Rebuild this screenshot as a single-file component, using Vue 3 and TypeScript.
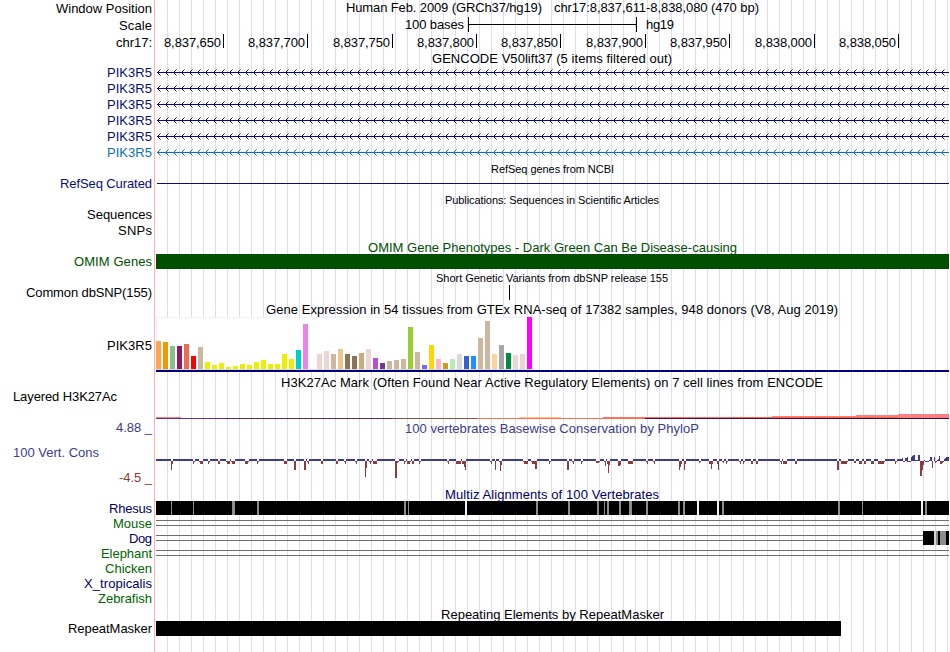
<template>
  <div class="browser">
    <svg class="track" width="950" height="16">
      <text class="label" x="152" y="13" textLength="96">Window Position</text>
      <text x="346" y="12" textLength="196">Human Feb. 2009 (GRCh37/hg19)</text>
      <text x="554" y="12" textLength="205">chr17:8,837,611-8,838,080 (470 bp)</text>
    </svg>

    <svg class="track" width="950" height="17">
      <text class="label" x="152" y="14" textLength="33">Scale</text>
      <text class="label" x="464" y="13" textLength="59">100 bases</text>
      <path d="M468 1h1v7h167v-7h1v15h-1v-7h-167v7h-1z" />
      <text x="646" y="13" textLength="28">hg19</text>
    </svg>

    <svg class="track" width="950" height="17">
      <text class="label" x="152" y="14" textLength="36">chr17:</text>
      <template v-for="t in ticks" :key="t.x">
        <text class="label" :x="t.x - 2" y="14" textLength="57">{{ t.text }}</text>
        <rect :x="t.x" y="1" width="1" height="14" />
      </template>
    </svg>

    <svg class="track" width="950" height="14">
      <text x="432" y="13" textLength="240">GENCODE V50lift37 (5 items filtered out)</text>
    </svg>
    <svg v-for="(color, i) in genes" :key="i" class="track" width="950" height="16" :fill="color">
      <text class="label" x="152" y="13" textLength="45">PIK3R5</text>
      <rect x="157" y="8" width="792" height="1" />
      <path class="chevrons" :d="chevrons" :stroke="color" />
    </svg>

    <svg class="track" width="950" height="15">
      <text class="small" x="491" y="13" textLength="123">RefSeq genes from NCBI</text>
    </svg>
    <svg class="track navy" width="950" height="16">
      <text class="label" x="152" y="13" textLength="92">RefSeq Curated</text>
      <rect x="157" y="8" width="792" height="1" />
    </svg>

    <svg class="track" width="950" height="15">
      <text class="small" x="445" y="13" textLength="214">Publications: Sequences in Scientific Articles</text>
    </svg>
    <svg class="track" width="950" height="16">
      <text class="label" x="152" y="13" textLength="65">Sequences</text>
    </svg>
    <svg class="track" width="950" height="16">
      <text class="label" x="152" y="13" textLength="34">SNPs</text>
    </svg>

    <svg class="track omim" width="950" height="15">
      <text x="368" y="14" textLength="369">OMIM Gene Phenotypes - Dark Green Can Be Disease-causing</text>
    </svg>
    <svg class="track omim" width="950" height="16">
      <text class="label" x="152" y="13" textLength="78">OMIM Genes</text>
      <rect x="156" y="1" width="793" height="15" />
    </svg>

    <svg class="track" width="950" height="15">
      <text class="small" x="436" y="13" textLength="232">Short Genetic Variants from dbSNP release 155</text>
    </svg>
    <svg class="track" width="950" height="16">
      <text class="label" x="152" y="13" textLength="126">Common dbSNP(155)</text>
      <rect x="509" y="1" width="1" height="15" />
    </svg>

    <svg class="track" width="950" height="16">
      <text x="266" y="14" textLength="572">Gene Expression in 54 tissues from GTEx RNA-seq of 17382 samples, 948 donors (V8, Aug 2019)</text>
    </svg>
    <svg class="track" width="950" height="56">
      <text class="label" x="152" y="34" textLength="45">PIK3R5</text>
      <rect x="156" y="1" width="378" height="53" fill="#f2f2f2" />
      <rect x="157" y="2" width="376" height="51" fill="#fff" />
      <rect x="156" y="53" width="378" height="1" fill="#d9d9d9" />
      <rect
        v-for="(b, i) in tissues"
        :key="i"
        :x="156 + i * 7"
        :y="53 - b[0]"
        width="5"
        :height="b[0]"
        :fill="b[1]"
      />
      <rect x="156" y="54" width="793" height="2" fill="#000078" />
    </svg>

    <svg class="track" width="950" height="16">
      <text x="281" y="15" textLength="542">H3K27Ac Mark (Often Found Near Active Regulatory Elements) on 7 cell lines from ENCODE</text>
    </svg>
    <svg class="track" width="950" height="31">
      <text x="13" y="13" textLength="104">Layered H3K27Ac</text>
      <rect v-for="(s, i) in acetyl" :key="i" :x="s[0]" :y="s[2]" :width="s[1] - s[0]" :height="s[3]" :fill="s[4]" />
    </svg>

    <svg class="track cons" width="950" height="68">
      <text x="405" y="14" textLength="294">100 vertebrates Basewise Conservation by PhyloP</text>
      <text class="label" x="152" y="13" textLength="36">4.88 _</text>
      <text x="13" y="38" textLength="86">100 Vert. Cons</text>
      <text class="label negative" x="152" y="63" textLength="33">-4.5 _</text>
      <rect v-for="(s, i) in conserved" :key="'c' + i" :x="s[0]" y="40" :width="s[1] - s[0]" height="2" />
      <rect v-for="(s, i) in peaks" :key="'p' + i" :x="s[0]" :y="42 - s[2]" :width="s[1]" :height="s[2]" />
      <rect
        v-for="(s, i) in dips"
        :key="'d' + i"
        class="negative"
        :x="s[0]"
        y="42"
        :width="s[1]"
        :height="s[2]"
      />
    </svg>

    <svg class="track multiz over" width="950" height="13">
      <text x="445" y="12" textLength="214">Multiz Alignments of 100 Vertebrates</text>
    </svg>
    <svg v-for="s in species" :key="s.name" class="track" width="950" height="15">
      <text class="label" :class="s.group" x="152" y="13" :textLength="s.width">{{ s.name }}</text>
      <template v-if="s.gap">
        <rect x="156" y="5" :width="s.gap - 156" height="1" fill="#6e6e6e" />
        <rect x="156" y="10" :width="s.gap - 156" height="1" fill="#6e6e6e" />
      </template>
      <rect v-for="(b, i) in s.blocks" :key="i" :x="b[0]" y="1" :width="b[1]" height="14" :fill="b[2]" />
    </svg>

    <svg class="track" width="950" height="15">
      <text x="441" y="14" textLength="223">Repeating Elements by RepeatMasker</text>
    </svg>
    <svg class="track" width="950" height="32">
      <text class="label" x="152" y="13" textLength="84">RepeatMasker</text>
      <rect x="156" y="1" width="685" height="15" />
    </svg>
  </div>
</template>

<script setup lang="ts">
type Block = [x: number, width: number, fill: string]

const winStart = 8837610
const winBases = 470

function baseToX(pos: number) {
  return Math.floor(156 + ((pos - winStart) * 793) / winBases)
}

const ticks = Array.from({ length: 9 }, (_, i) => {
  const pos = 8837650 + i * 50
  return { x: baseToX(pos), text: pos.toLocaleString('en-US') }
})

const genes = ['#0c0c78', '#0c0c78', '#0c0c78', '#0c0c78', '#0c0c78', '#0c70b4']

// strand arrows, one every 8px
const chevrons = Array.from({ length: 99 }, (_, i) => `M${160.5 + i * 8} 5.5l-3 3l3 3`).join('')

// [height, color] for each tissue
const tissues: [number, string][] = [
  [28, '#ffa54f'], [27, '#ee9a00'], [23, '#8fbc8f'], [23, '#8b1c62'], [25, '#ee6a50'], [13, '#ff0000'],
  [22, '#cdb79e'], [7, '#eeee00'], [4, '#eeee00'], [6, '#eeee00'], [2, '#eeee00'], [3, '#eeee00'],
  [5, '#eeee00'], [4, '#eeee00'], [7, '#eeee00'], [9, '#eeee00'], [5, '#eeee00'], [5, '#eeee00'],
  [15, '#eeee00'], [10, '#eeee00'], [19, '#00cdcd'], [45, '#ee82ee'], [0, '#9ac0cd'], [15, '#eed5d2'],
  [18, '#eed5d2'], [15, '#cdb79e'], [20, '#eec591'], [15, '#8b7355'], [13, '#8b7355'], [16, '#cdaa7d'],
  [20, '#eed5d2'], [11, '#b452cd'], [6, '#7a378b'], [8, '#cdb79e'], [9, '#cdb79e'], [10, '#cdb79e'],
  [42, '#9acd32'], [17, '#cdb79e'], [4, '#7a67ee'], [24, '#ffd700'], [10, '#ffb6c1'], [6, '#cd9b1d'],
  [10, '#b4eeb4'], [15, '#d9d9d9'], [13, '#3a5fcd'], [13, '#1e90ff'], [31, '#cdb79e'], [48, '#cdb79e'],
  [15, '#ffd39b'], [24, '#a6a6a6'], [16, '#008b45'], [14, '#eed5d2'], [15, '#eed5d2'], [52, '#ff00ff'],
]

// [x1, x2, y, height, color]
const acetyl: [number, number, number, number, string][] = [
  [156, 181, 29, 1, '#ff8080'],
  [156, 223, 30, 1, '#64308c'],
  [223, 392, 30, 1, '#642c40'],
  [392, 477, 30, 1, '#80563c'],
  [477, 645, 30, 1, '#ff6e46'],
  [519, 561, 29, 1, '#ffc382'],
  [603, 730, 29, 1, '#ff7068'],
  [730, 898, 29, 1, '#ff6444'],
  [772, 856, 28, 1, '#ff8078'],
  [856, 898, 27, 2, '#ff8080'],
  [898, 949, 26, 4, '#ff8080'],
  [645, 814, 30, 1, '#500a46'],
  [814, 949, 30, 1, '#3c0a32'],
]

// [x, width, depth]
const dips: [number, number, number][] = [
  [171, 1, 9], [172, 1, 3], [193, 1, 3], [194, 1, 1], [199, 1, 1], [200, 3, 3], [208, 1, 3], [209, 1, 1],
  [218, 2, 3], [226, 1, 1], [227, 3, 3], [231, 1, 1], [232, 3, 3], [245, 3, 3], [248, 1, 1], [257, 1, 3],
  [258, 1, 1], [284, 3, 3], [294, 2, 9], [304, 2, 9], [307, 1, 1], [308, 1, 3], [321, 2, 3], [336, 2, 3],
  [344, 1, 1], [345, 1, 3], [355, 1, 1], [356, 1, 3], [365, 1, 16], [366, 1, 7], [369, 1, 1], [370, 1, 3],
  [371, 1, 1], [373, 4, 3], [395, 2, 17], [397, 1, 2], [398, 1, 1], [404, 1, 3], [405, 1, 1], [407, 3, 3],
  [410, 1, 1], [412, 2, 3], [419, 1, 3], [420, 1, 1], [447, 1, 1], [448, 1, 3], [456, 5, 3], [462, 2, 3],
  [464, 1, 6], [465, 1, 9], [490, 1, 1], [491, 1, 3], [495, 1, 9], [499, 1, 1], [500, 1, 10], [501, 1, 4],
  [523, 1, 1], [524, 4, 3], [531, 1, 1], [532, 3, 3], [535, 2, 8], [549, 1, 3], [550, 1, 1], [567, 2, 9],
  [572, 1, 1], [573, 1, 3], [581, 1, 3], [582, 1, 1], [596, 3, 2], [599, 1, 1], [604, 1, 1], [605, 1, 5],
  [607, 1, 3], [608, 1, 12], [609, 1, 4], [618, 2, 5], [620, 1, 4], [628, 5, 3], [646, 1, 1], [647, 1, 3],
  [653, 1, 1], [654, 1, 3], [679, 1, 9], [680, 1, 6], [681, 1, 3], [684, 1, 9], [685, 1, 3], [699, 1, 2],
  [700, 1, 1], [709, 2, 3], [711, 1, 8], [712, 1, 3], [717, 1, 3], [718, 1, 9], [722, 1, 1], [723, 1, 2],
  [726, 1, 3], [727, 1, 1], [739, 1, 1], [740, 1, 3], [743, 1, 3], [744, 1, 1], [751, 2, 3], [756, 2, 3],
  [780, 1, 1], [781, 1, 3], [783, 4, 3], [795, 2, 3], [837, 2, 9], [841, 6, 3], [847, 1, 1], [854, 2, 2],
  [859, 3, 3], [864, 2, 3], [871, 3, 3], [878, 6, 3], [884, 1, 1], [895, 1, 3], [896, 1, 1], [903, 2, 1],
  [907, 4, 1], [920, 2, 15], [922, 1, 9], [923, 1, 4], [925, 4, 1], [932, 1, 7], [935, 1, 2], [936, 1, 1],
  [940, 2, 3], [942, 1, 2], [943, 1, 1],
]

// [x, width, height]
const peaks: [number, number, number][] = [
  [902, 1, 3], [905, 2, 3], [907, 1, 4], [911, 1, 4], [912, 1, 5], [913, 2, 6], [915, 3, 1],
  [918, 2, 6], [924, 1, 1], [929, 1, 1], [930, 2, 4], [934, 1, 4], [937, 1, 1], [938, 1, 2],
  [939, 1, 5], [944, 1, 2], [945, 1, 3], [946, 3, 4],
]

// the thin positive signal runs between the dips, up to where the peaks begin
const conserved: [number, number][] = []
let from = 156
for (const [x, w] of dips) {
  if (x > 902) break
  if (x > from) conserved.push([from, x])
  from = x + w
}
conserved.push([from, 902])

const grey = '#8c8c8c'
const light = '#f0f0f0'

const rhesus: Block[] = [
  [156, 793, '#000'],
  [171, 1, grey], [193, 1, grey], [232, 3, grey], [257, 2, grey], [404, 2, grey], [408, 1, grey],
  [465, 2, light], [536, 2, grey], [568, 2, grey], [597, 2, grey], [604, 1, grey], [607, 2, grey],
  [619, 2, grey], [629, 3, grey], [646, 2, grey], [678, 2, grey], [683, 2, grey], [697, 2, light],
  [717, 2, light], [722, 2, grey], [838, 2, grey], [862, 1, grey], [921, 2, light], [925, 2, grey],
]

const dog: Block[] = [
  [923, 26, '#000'],
  [934, 2, '#d2d2d2'],
  [936, 2, grey],
  [940, 6, grey],
]

const species: { name: string; group: string; width: number; gap?: number; blocks?: Block[] }[] = [
  { name: 'Rhesus', group: 'multiz', width: 43, blocks: rhesus },
  { name: 'Mouse', group: 'green', width: 39, gap: 949 },
  { name: 'Dog', group: 'multiz', width: 23, gap: 923, blocks: dog },
  { name: 'Elephant', group: 'green', width: 51, gap: 949 },
  { name: 'Chicken', group: 'green', width: 47 },
  { name: 'X_tropicalis', group: 'multiz', width: 68 },
  { name: 'Zebrafish', group: 'green', width: 54 },
]
</script>

<style>
body {
  margin: 0;
  background: #fff;
}
</style>

<style scoped>
.browser {
  display: flex;
  flex-direction: column;
  width: 950px;
  height: 652px;
  overflow: hidden;
  font-family: 'Liberation Sans', Arial, Helvetica, sans-serif;
  font-size: 13px;
  background:
    linear-gradient(#ffb4b4, #ffb4b4) 154px 0 / 1px 100% no-repeat,
    linear-gradient(#fff, #fff) 0 0 / 156px 100% no-repeat,
    linear-gradient(to right, #dcdcff 1px, transparent 1px) 167px 0 / 12px 100%;
}

.track {
  display: block;
  flex: none;
  overflow: visible;
  shape-rendering: crispEdges;
}

.over {
  position: relative;
  z-index: 1;
}

.label {
  text-anchor: end;
}

.small {
  font-size: 11px;
}

.chevrons {
  fill: none;
  stroke-width: 1;
  shape-rendering: auto;
}

.navy {
  fill: #0c0c78;
}

.omim {
  fill: #005000;
}

.cons {
  fill: #3c3c8c;
}

.negative {
  fill: #8c3c3c;
}

.multiz {
  fill: #000064;
}

.green {
  fill: #006400;
}
</style>
